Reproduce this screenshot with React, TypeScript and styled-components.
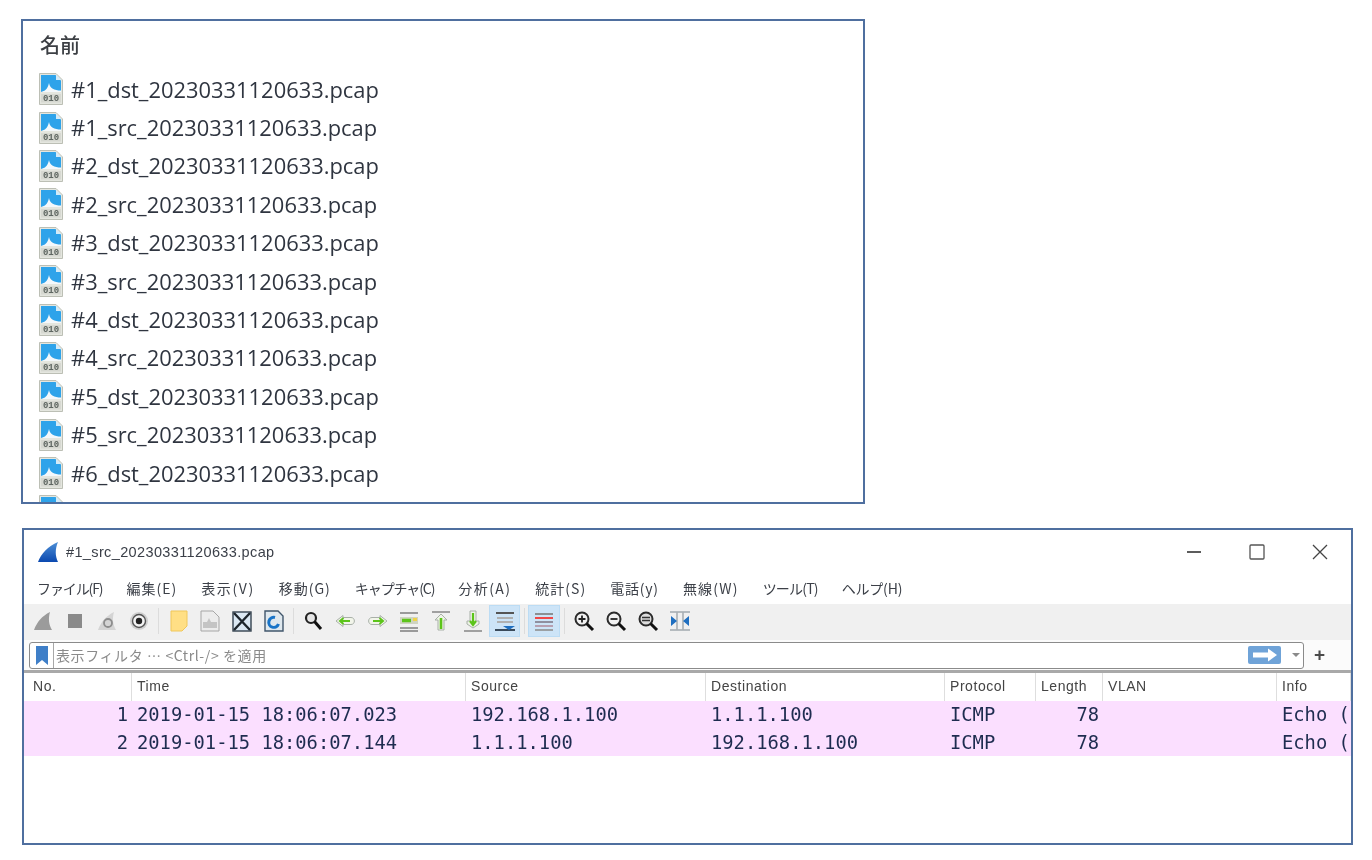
import React from 'react';
import styled, { createGlobalStyle } from 'styled-components';

const GlobalStyle = createGlobalStyle`
  html, body {
    margin: 0;
    padding: 0;
    background: #fff;
  }
`;

const FILES = [
  '#1_dst_20230331120633.pcap',
  '#1_src_20230331120633.pcap',
  '#2_dst_20230331120633.pcap',
  '#2_src_20230331120633.pcap',
  '#3_dst_20230331120633.pcap',
  '#3_src_20230331120633.pcap',
  '#4_dst_20230331120633.pcap',
  '#4_src_20230331120633.pcap',
  '#5_dst_20230331120633.pcap',
  '#5_src_20230331120633.pcap',
  '#6_dst_20230331120633.pcap',
  '',
];

// kanji labels sit wider than the katakana ones in the capture
const MENUS = [
  { label: 'ファイル(F)', spacing: -1.1 },
  { label: '編集(E)', spacing: 1 },
  { label: '表示(V)', spacing: 1.6 },
  { label: '移動(G)', spacing: 1 },
  { label: 'キャプチャ(C)', spacing: -1.1 },
  { label: '分析(A)', spacing: 1.4 },
  { label: '統計(S)', spacing: 1 },
  { label: '電話(y)', spacing: 0.8 },
  { label: '無線(W)', spacing: 1.2 },
  { label: 'ツール(T)', spacing: -0.8 },
  { label: 'ヘルプ(H)', spacing: -0.2 },
];

const COLUMNS = ['No.', 'Time', 'Source', 'Destination', 'Protocol', 'Length', 'VLAN', 'Info'];

const PACKETS = [
  ['1', '2019-01-15 18:06:07.023', '192.168.1.100', '1.1.1.100', 'ICMP', '78', '', 'Echo ('],
  ['2', '2019-01-15 18:06:07.144', '1.1.1.100', '192.168.1.100', 'ICMP', '78', '', 'Echo ('],
];

const GRID = '108px 334px 240px 239px 91px 67px 174px 1fr';

const Page = styled.div`
  display: flex;
  flex-direction: column;
  gap: 24px;
  width: 1372px;
  height: 860px;
  padding: 19px 0 0 21px;
  box-sizing: border-box;
  overflow: hidden;
  filter: blur(0.55px);
`;

/* ------------------------------ File listing ------------------------------ */
const ListPanel = styled.section`
  width: 844px;
  height: 485px;
  box-sizing: border-box;
  border: 2px solid #4f6f9f;
  overflow: hidden;
  background: #fff;
`;

const ListHeader = styled.div`
  height: 49px;
  padding: 10px 0 0 17px;
  box-sizing: border-box;
  font-family: 'Noto Sans CJK JP', sans-serif;
  font-size: 20px;
  font-weight: 500;
  line-height: 28px;
  color: #3c3f44;
`;

const FileRow = styled.div`
  display: flex;
  align-items: center;
  gap: 8px;
  height: 38.4px;
  padding-left: 16px;
`;

const FileName = styled.span`
  font-family: 'Open Sans', sans-serif;
  font-size: 21.9px;
  color: #2f3540;
  white-space: nowrap;
`;

// the last row is cut by the panel edge, so only its blue top shows
const FileIcon = ({ clipped }: { clipped?: boolean }) => (
  <svg width="24" height="32" viewBox="0 0 24 32">
    <path d="M0.5 0.5H17L23.5 7V31.5H0.5Z" fill="#e4e6df" stroke="#bcbfb5" />
    <path d="M2 2H16.5L22 7.5V19H2Z" fill="#2ea3ea" />
    <path d="M2 19C6 18 8.5 16.5 10 10C11 15.5 15 17.5 22 17.5V19Z" fill="#f4f8fb" />
    <path d="M17 1.5L22.5 7H17Z" fill="#d4ebf8" />
    <rect x="2" y="21" width="20" height="8.5" fill="#d6d8d1" />
    {!clipped && (
      <text x="12" y="28.2" textAnchor="middle" fontFamily="'Liberation Mono', monospace" fontSize="9" fontWeight="700" fill="#5e6661">
        010
      </text>
    )}
  </svg>
);

/* ----------------------------- Wireshark window --------------------------- */
const Window = styled.section`
  display: flex;
  flex-direction: column;
  width: 1331px;
  height: 317px;
  margin-left: 1px;
  box-sizing: border-box;
  border: 2px solid #4f6f9f;
  overflow: hidden;
  background: #fff;
`;

const TitleBar = styled.div`
  display: flex;
  align-items: center;
  height: 43px;
  padding-left: 13px;
  flex: none;
`;

const TitleText = styled.span`
  flex: 1;
  margin-left: 7px;
  font-family: 'Liberation Sans', sans-serif;
  font-size: 14.5px;
  letter-spacing: 0.37px;
  color: #3a3f48;
`;

const WindowButton = styled.div`
  display: flex;
  align-items: center;
  justify-content: center;
  width: 63px;
  height: 100%;
`;

const MenuBar = styled.nav`
  display: flex;
  align-items: center;
  gap: 24px;
  height: 31px;
  padding: 0 0 2px 13px;
  box-sizing: border-box;
  flex: none;
`;

const MenuItem = styled.span<{ $spacing: number }>`
  font-family: 'Noto Sans CJK JP', sans-serif;
  font-size: 14px;
  letter-spacing: ${(p) => p.$spacing}px;
  color: #3c4048;
  white-space: nowrap;
`;

const Toolbar = styled.div`
  display: flex;
  align-items: center;
  height: 36px;
  padding: 0 0 2px 3.5px;
  box-sizing: border-box;
  background: #f0f0f0;
  flex: none;
`;

const ToolButton = styled.div<{ $active?: boolean }>`
  display: flex;
  align-items: center;
  justify-content: center;
  width: 31.8px;
  height: 32px;
  box-sizing: border-box;
  background: ${(p) => (p.$active ? '#cde4f7' : 'transparent')};
  border: 1px solid ${(p) => (p.$active ? '#bcdcf4' : 'transparent')};
`;

const ToolSeparator = styled.div`
  width: 1px;
  height: 26px;
  margin: 0 3.5px;
  background: #dcdcdc;
`;

const FilterRow = styled.div`
  display: flex;
  align-items: center;
  height: 33px;
  padding: 0 0 0 5px;
  box-sizing: border-box;
  flex: none;
  background: #fbfbfb;
  border-bottom: 3px solid #a9a9a9;
`;

const FilterBox = styled.div`
  display: flex;
  align-items: center;
  flex: none;
  width: 1275px;
  height: 27px;
  box-sizing: border-box;
  border: 1.5px solid #8b8b8b;
  border-radius: 3px;
  background: #fff;
`;

const Bookmark = styled.div`
  display: flex;
  align-items: center;
  justify-content: center;
  width: 23px;
  height: 100%;
  border-right: 1px solid #a8a8a8;
  flex: none;
`;

const FilterText = styled.span`
  flex: 1;
  margin-left: 2px;
  font-family: 'Noto Sans CJK JP', sans-serif;
  font-size: 14px;
  letter-spacing: 0.6px;
  color: #8a8a8a;
  white-space: nowrap;
`;

const ApplyButton = styled.div`
  display: flex;
  align-items: center;
  justify-content: center;
  width: 33px;
  height: 18px;
  margin-right: 11px;
  border-radius: 2px;
  background: #6fa3d8;
`;

const Caret = styled.div`
  width: 0;
  height: 0;
  margin-right: 3px;
  border-left: 4px solid transparent;
  border-right: 4px solid transparent;
  border-top: 4px solid #8a8a8a;
`;

const PlusSign = styled.span`
  margin-left: 10px;
  font-family: 'Liberation Sans', sans-serif;
  font-size: 19px;
  font-weight: 700;
  color: #4a4a4a;
`;

const HeaderRow = styled.div`
  display: grid;
  grid-template-columns: ${GRID};
  height: 28px;
  flex: none;
`;

const HeaderCell = styled.div`
  padding-left: 5px;
  line-height: 27px;
  border-right: 1px solid #dedede;
  font-family: 'Liberation Sans', sans-serif;
  font-size: 14px;
  letter-spacing: 0.55px;
  color: #444;
  white-space: nowrap;

  &:first-child {
    padding-left: 9px;
  }
`;

const PacketRow = styled.div`
  display: grid;
  grid-template-columns: ${GRID};
  height: 27.5px;
  flex: none;
  background: #fbdfff;
`;

const PacketCell = styled.div<{ $right?: boolean }>`
  padding: 0 ${(p) => (p.$right ? '4px' : '0')} 0 ${(p) => (p.$right ? '0' : '5px')};
  text-align: ${(p) => (p.$right ? 'right' : 'left')};
  line-height: 27px;
  font-family: 'DejaVu Sans Mono', monospace;
  font-size: 18.8px;
  color: #1e2c50;
  white-space: pre;
  overflow: hidden;
`;

const ToolIcon = ({ name }: { name: string }) => {
  const green = '#5cc41a';
  const outline = '#a8b0a8';
  const content: Record<string, React.ReactNode> = {
    fin: <path d="M2 20C5 12 10 6 18 2C16 9 17 15 20 20Z" fill="#9b9b9b" />,
    stop: <rect x="4" y="4" width="14" height="14" fill="#8a8a8a" />,
    restart: (
      <>
        <path d="M2 20C5 12 10 6 18 2C16 9 17 15 20 20Z" fill="#d4d4d4" />
        <circle cx="12" cy="13" r="4" fill="none" stroke="#8d8d8d" strokeWidth="1.8" />
      </>
    ),
    options: (
      <>
        <circle cx="11" cy="11" r="9" fill="#cfcfcf" />
        <circle cx="11" cy="11" r="6.5" fill="#f4f4f4" stroke="#555" strokeWidth="1.4" />
        <circle cx="11" cy="11" r="3.2" fill="#222" />
      </>
    ),
    open: <path d="M3 1H19V16L14 21H3Z" fill="#ffdf85" stroke="#f0c75a" />,
    file: (
      <>
        <path d="M2 1H14L20 7V21H2Z" fill="#ececec" stroke="#a6a6a6" />
        <path d="M4 12H8L10 8L12 12H18V18H4Z" fill="#c4c4c4" />
      </>
    ),
    close: (
      <>
        <rect x="2" y="2" width="18" height="19" fill="#dbe8f3" stroke="#33414d" strokeWidth="1.4" />
        <path d="M3 3L19 20M19 3L3 20" stroke="#1d252c" strokeWidth="2.4" />
      </>
    ),
    reload: (
      <>
        <path d="M2 1H15L20 6V21H2Z" fill="#dfe8ee" stroke="#40566b" strokeWidth="1.4" />
        <path d="M15.5 14A5 5 0 1 1 12 7.5" fill="none" stroke="#1874c8" strokeWidth="3" />
      </>
    ),
    find: (
      <>
        <circle cx="8" cy="8" r="5" fill="#e6e6e6" stroke="#222" strokeWidth="2.2" />
        <path d="M11.5 11.5L18 19" stroke="#111" strokeWidth="3" />
      </>
    ),
    back: (
      <>
        <path d="M1 11L8 5.5V7.5H16C20.5 7.5 20.5 14.5 16 14.5H8V16.5Z" fill="#f2f5ea" stroke={outline} />
        <path d="M5 11H15M8.5 8L5 11L8.5 14" fill="none" stroke={green} strokeWidth="2" />
      </>
    ),
    next: (
      <>
        <path d="M21 11L14 5.5V7.5H6C1.5 7.5 1.5 14.5 6 14.5H14V16.5Z" fill="#f2f5ea" stroke={outline} />
        <path d="M7 11H17M13.5 8L17 11L13.5 14" fill="none" stroke={green} strokeWidth="2" />
      </>
    ),
    jump: (
      <>
        <path d="M2 3H20M2 18H20M2 21H20" stroke="#7d7d7d" strokeWidth="1.4" />
        <rect x="2" y="7" width="18" height="7" fill="#cfd4c2" />
        <path d="M4 10.5H13" stroke={green} strokeWidth="3.5" />
        <rect x="15" y="8" width="4" height="3" fill="#f0d34a" />
      </>
    ),
    first: (
      <>
        <path d="M2 2H20" stroke="#7d7d7d" strokeWidth="1.4" />
        <path d="M11 4L17 10H14V20H8V10H5Z" fill="#eef3e6" stroke={outline} />
        <path d="M11 8V19" stroke={green} strokeWidth="2.6" />
      </>
    ),
    last: (
      <>
        <path d="M2 21H20" stroke="#7d7d7d" strokeWidth="1.4" />
        <path d="M8 1V11H5V14L11 18L17 14V11H14V1Z" fill="#eef3e6" stroke={outline} />
        <path d="M11 3V14M8 11L11 15L14 11" fill="none" stroke={green} strokeWidth="2.2" />
      </>
    ),
    autoscroll: (
      <>
        <path d="M2 3H20" stroke="#555" strokeWidth="2" />
        <path d="M3 8H19M3 12H19" stroke="#b0b0b0" strokeWidth="2" />
        <path d="M1 20H21" stroke="#3a4a5a" strokeWidth="2" />
        <path d="M9 16H21L15 20Z" fill="#1f6fc0" />
      </>
    ),
    colorize: (
      <>
        <path d="M2 4H20" stroke="#7b7b7b" strokeWidth="1.6" />
        <path d="M2 8H20" stroke="#f04848" strokeWidth="2" />
        <path d="M2 12H20" stroke="#8f8f9f" strokeWidth="2" />
        <path d="M2 16H20" stroke="#b79fb0" strokeWidth="2" />
        <path d="M2 20H20" stroke="#8f8f8f" strokeWidth="1.6" />
      </>
    ),
    zoomIn: (
      <>
        <circle cx="9" cy="9" r="6.5" fill="#f2f2f2" stroke="#2b2b2b" strokeWidth="2" />
        <path d="M5.5 9H12.5M9 5.5V12.5" stroke="#222" strokeWidth="1.8" />
        <path d="M13.5 13.5L20 20" stroke="#111" strokeWidth="3" />
      </>
    ),
    zoomOut: (
      <>
        <circle cx="9" cy="9" r="6.5" fill="#f2f2f2" stroke="#2b2b2b" strokeWidth="2" />
        <path d="M5.5 9H12.5" stroke="#222" strokeWidth="1.8" />
        <path d="M13.5 13.5L20 20" stroke="#111" strokeWidth="3" />
      </>
    ),
    zoomReset: (
      <>
        <circle cx="9" cy="9" r="6.5" fill="#ddd" stroke="#2b2b2b" strokeWidth="2" />
        <path d="M5 7.5H13M5 10.5H13" stroke="#333" strokeWidth="1.5" />
        <path d="M13.5 13.5L20 20" stroke="#111" strokeWidth="3" />
      </>
    ),
    resize: (
      <>
        <path d="M1 2H21M1 20H21" stroke="#b5bbbf" strokeWidth="2" />
        <path d="M8 2V20M14 2V20" stroke="#a9afb3" strokeWidth="1.6" />
        <path d="M2 6L8 11L2 16ZM20 6L14 11L20 16Z" fill="#1f6fc0" />
      </>
    ),
  };
  return (
    <svg width="22" height="22" viewBox="0 0 22 22">
      {content[name]}
    </svg>
  );
};

const TOOL_GROUPS: { name: string; active?: boolean }[][] = [
  [{ name: 'fin' }, { name: 'stop' }, { name: 'restart' }, { name: 'options' }],
  [{ name: 'open' }, { name: 'file' }, { name: 'close' }, { name: 'reload' }],
  [
    { name: 'find' },
    { name: 'back' },
    { name: 'next' },
    { name: 'jump' },
    { name: 'first' },
    { name: 'last' },
    { name: 'autoscroll', active: true },
  ],
  [{ name: 'colorize', active: true }],
  [{ name: 'zoomIn' }, { name: 'zoomOut' }, { name: 'zoomReset' }, { name: 'resize' }],
];

const App: React.FC = () => (
  <>
    <GlobalStyle />
    <Page>
      <ListPanel>
        <ListHeader>名前</ListHeader>
        {FILES.map((file, i) => (
          <FileRow key={i}>
            <FileIcon clipped={!file} />
            {file && <FileName>{file}</FileName>}
          </FileRow>
        ))}
      </ListPanel>

      <Window>
        <TitleBar>
          <svg width="22" height="22" viewBox="0 0 22 22">
            <defs>
              <linearGradient id="fin" x1="0" y1="0" x2="0" y2="1">
                <stop offset="0" stopColor="#4d8fd6" />
                <stop offset="1" stopColor="#0b49b0" />
              </linearGradient>
            </defs>
            <path d="M1 21C4 13 11 5 21 1C18 8 18 15 21 21Z" fill="url(#fin)" />
          </svg>
          <TitleText>#1_src_20230331120633.pcap</TitleText>
          <WindowButton>
            <svg width="16" height="16" viewBox="0 0 16 16">
              <path d="M1 8H15" stroke="#333" strokeWidth="1.6" />
            </svg>
          </WindowButton>
          <WindowButton>
            <svg width="16" height="16" viewBox="0 0 16 16">
              <rect x="1" y="1" width="14" height="14" rx="1" fill="none" stroke="#555" strokeWidth="1.3" />
            </svg>
          </WindowButton>
          <WindowButton>
            <svg width="16" height="16" viewBox="0 0 16 16">
              <path d="M1 1L15 15M15 1L1 15" stroke="#444" strokeWidth="1.3" />
            </svg>
          </WindowButton>
        </TitleBar>

        <MenuBar>
          {MENUS.map((menu) => (
            <MenuItem key={menu.label} $spacing={menu.spacing}>
              {menu.label}
            </MenuItem>
          ))}
        </MenuBar>

        <Toolbar>
          {TOOL_GROUPS.map((group, i) => (
            <React.Fragment key={i}>
              {i > 0 && <ToolSeparator />}
              {group.map((tool) => (
                <ToolButton key={tool.name} $active={tool.active}>
                  <ToolIcon name={tool.name} />
                </ToolButton>
              ))}
            </React.Fragment>
          ))}
        </Toolbar>

        <FilterRow>
          <FilterBox>
            <Bookmark>
              <svg width="12" height="19" viewBox="0 0 12 19">
                <path d="M0 0H12V19L6 14L0 19Z" fill="#3f7fc8" />
              </svg>
            </Bookmark>
            <FilterText>表示フィルタ … &lt;Ctrl-/&gt; を適用</FilterText>
            <ApplyButton>
              <svg width="26" height="14" viewBox="0 0 26 14">
                <path d="M1 4.5H16V0.5L25 7L16 13.5V9.5H1Z" fill="#fff" />
              </svg>
            </ApplyButton>
            <Caret />
          </FilterBox>
          <PlusSign>+</PlusSign>
        </FilterRow>

        <HeaderRow>
          {COLUMNS.map((col) => (
            <HeaderCell key={col}>{col}</HeaderCell>
          ))}
        </HeaderRow>

        {PACKETS.map((row) => (
          <PacketRow key={row[0]}>
            {row.map((cell, i) => (
              <PacketCell key={i} $right={i === 0 || i === 5}>
                {cell}
              </PacketCell>
            ))}
          </PacketRow>
        ))}
      </Window>
    </Page>
  </>
);

export default App;
